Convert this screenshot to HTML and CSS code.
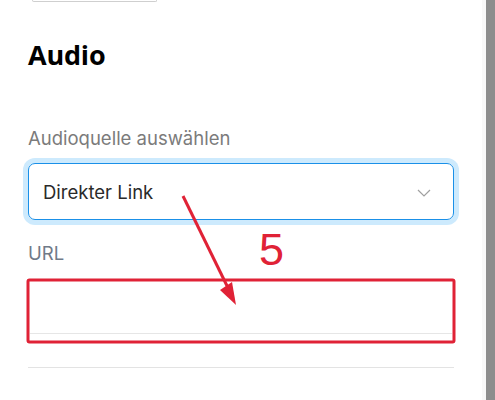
FILE: index.html
```html
<!DOCTYPE html>
<html lang="de">
<head>
<meta charset="utf-8">
<link rel="stylesheet" href="styles.css">
</head>
<body>
<div class="page">
  <main class="panel">
    <div class="top-btn"></div>
    <h2 class="title">Audio</h2>
    <label class="label label-source">Audioquelle auswählen</label>
    <div class="select">
      <span class="select-text">Direkter Link</span>
      <svg class="chev" width="14" height="8" viewBox="0 0 14 8"><path d="M1 1 L7 7 L13 1" fill="none" stroke="#a0a0a0" stroke-width="1.2"/></svg>
    </div>
    <label class="label label-url">URL</label>
    <div class="url-input"></div>
    <div class="divider"></div>
  </main>
  <div class="scroll-track"><div class="scroll-thumb"></div></div>
  <svg class="annot" width="495" height="400" viewBox="0 0 495 400">
    <rect x="28" y="280" width="426" height="62" rx="1.5" fill="none" stroke="#e02236" stroke-width="3"/>
    <line x1="183" y1="196" x2="231" y2="294" stroke="#e02236" stroke-width="3"/>
    <polygon points="236,305 220,290 232,282" fill="#e02236"/>
    <text x="259" y="265" class="num">5</text>
  </svg>
</div>
</body>
</html>
```

FILE: styles.css
```css
html, body {
  margin: 0;
  padding: 0;
  background: #ffffff;
}
.page {
  position: relative;
  width: 495px;
  height: 400px;
  overflow: hidden;
  display: flex;
}
.panel {
  width: 426px;
  padding-left: 28px;
  display: flex;
  flex-direction: column;
  font-family: Inter, "Noto Sans", sans-serif;
}
.top-btn {
  margin-left: 4px;
  width: 123px;
  height: 1px;
  border: 1px solid #cfcfcf;
  border-top: none;
  border-radius: 0 0 6px 6px;
}
.title {
  margin: 38px 0 0 0;
  font-family: "Open Sans", sans-serif;
  font-weight: 700;
  font-size: 27px;
  line-height: 30px;
  color: #000;
  letter-spacing: -0.2px;
}
.label {
  display: block;
  font-size: 18.5px;
  line-height: 20px;
  color: #7b7b7b;
  font-weight: 400;
}
.label-source {
  margin-top: 58px;
}
.select {
  margin-top: 15px;
  height: 55px;
  border: 1px solid #1a90e8;
  border-radius: 7px;
  box-shadow: 0 0 0 5px #cdeafd;
  display: flex;
  align-items: center;
  justify-content: space-between;
  padding: 0 22px 0 14px;
}
.select-text {
  font-size: 18.5px;
  color: #2a2a2a;
}
.chev {
  display: block;
  margin-top: 2px;
}
.label-url {
  margin-top: 23px;
  color: #707a88;
}
.url-input {
  margin-top: 23px;
  height: 47px;
  margin-left: 2px;
  margin-right: 2px;
  border-bottom: 1px solid #e6e6e6;
}
.divider {
  margin-top: 33px;
  height: 1px;
  background: #e3e3e3;
}
.scroll-track {
  margin-left: auto;
  width: 13px;
  height: 400px;
  background: #f8f8f8;
  display: flex;
  justify-content: flex-end;
}
.scroll-thumb {
  width: 9px;
  height: 400px;
  background: #8d8d8d;
}
.annot {
  position: absolute;
  left: 0;
  top: 0;
  pointer-events: none;
}
.num {
  font-family: "Liberation Sans", Arial, sans-serif;
  font-size: 45px;
  fill: #e02236;
}
```
